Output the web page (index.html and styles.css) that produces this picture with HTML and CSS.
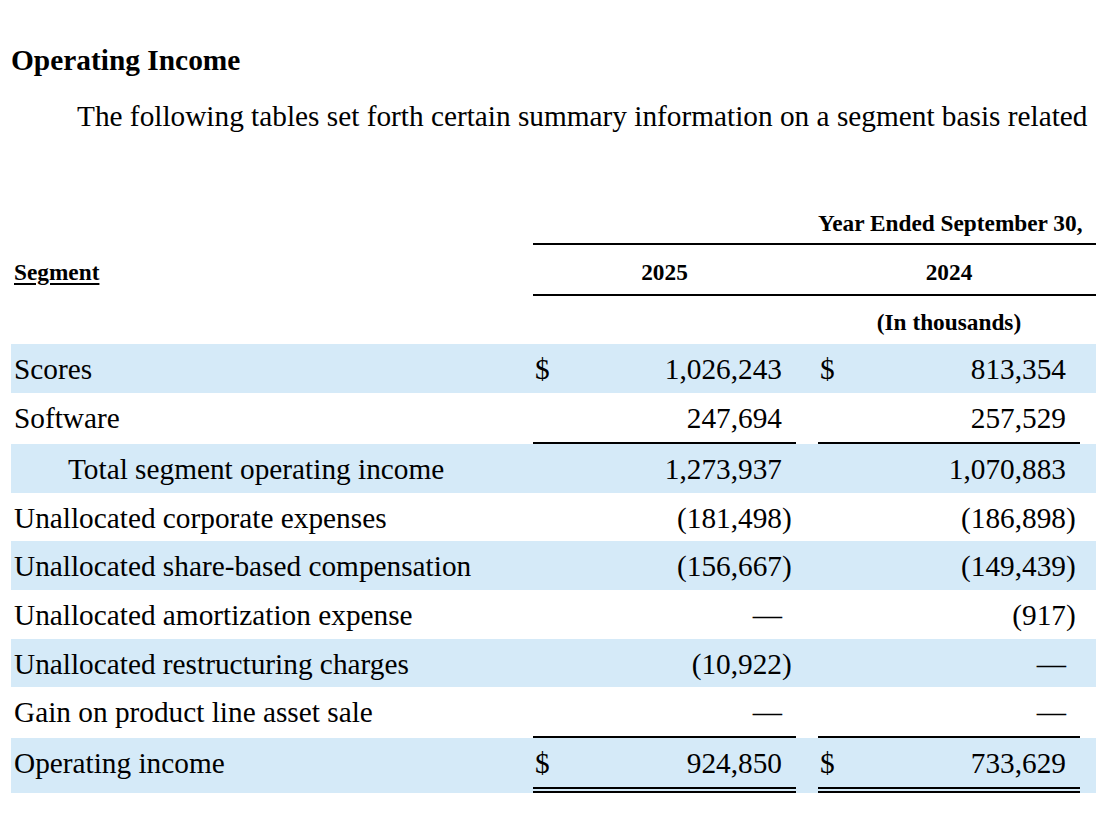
FILE: index.html
```html
<!DOCTYPE html>
<html lang="en">
<head>
<meta charset="utf-8">
<title>Operating Income</title>
<link rel="stylesheet" href="styles.css">
</head>
<body>
<div class="page">
  <h2 class="heading">Operating Income</h2>
  <p class="intro">The following tables set forth certain summary information on a segment basis related</p>

  <table class="fin">
    <colgroup>
      <col class="c-label">
      <col class="c-cur">
      <col class="c-num">
      <col class="c-par">
      <col class="c-gap">
      <col class="c-cur">
      <col class="c-num2">
      <col class="c-par">
      <col class="c-rest">
    </colgroup>
    <tbody>
      <tr class="h1">
        <td></td>
        <td colspan="4" class="ruled"></td>
        <td colspan="3" class="hd ruled">Year Ended September 30,</td>
        <td class="ruled"></td>
      </tr>
      <tr class="h2">
        <td class="seg">Segment</td>
        <td colspan="3" class="hd ruled">2025</td>
        <td class="ruled"></td>
        <td colspan="3" class="hd ruled">2024</td>
        <td class="ruled"></td>
      </tr>
      <tr class="h3">
        <td></td>
        <td colspan="4"></td>
        <td colspan="3" class="hd">(In thousands)</td>
        <td></td>
      </tr>

      <tr class="row shade">
        <td class="lbl">Scores</td>
        <td class="cur">$</td><td class="num">1,026,243</td><td class="par"></td>
        <td></td>
        <td class="cur">$</td><td class="num">813,354</td><td class="par"></td>
        <td></td>
      </tr>
      <tr class="row">
        <td class="lbl">Software</td>
        <td class="cur under"></td><td class="num under">247,694</td><td class="par under"></td>
        <td></td>
        <td class="cur under"></td><td class="num under">257,529</td><td class="par under"></td>
        <td></td>
      </tr>
      <tr class="row shade">
        <td class="lbl indent">Total segment operating income</td>
        <td class="cur"></td><td class="num">1,273,937</td><td class="par"></td>
        <td></td>
        <td class="cur"></td><td class="num">1,070,883</td><td class="par"></td>
        <td></td>
      </tr>
      <tr class="row">
        <td class="lbl">Unallocated corporate expenses</td>
        <td class="cur"></td><td class="num">(181,498</td><td class="par">)</td>
        <td></td>
        <td class="cur"></td><td class="num">(186,898</td><td class="par">)</td>
        <td></td>
      </tr>
      <tr class="row shade">
        <td class="lbl">Unallocated share-based compensation</td>
        <td class="cur"></td><td class="num">(156,667</td><td class="par">)</td>
        <td></td>
        <td class="cur"></td><td class="num">(149,439</td><td class="par">)</td>
        <td></td>
      </tr>
      <tr class="row">
        <td class="lbl">Unallocated amortization expense</td>
        <td class="cur"></td><td class="num">—</td><td class="par"></td>
        <td></td>
        <td class="cur"></td><td class="num">(917</td><td class="par">)</td>
        <td></td>
      </tr>
      <tr class="row shade">
        <td class="lbl">Unallocated restructuring charges</td>
        <td class="cur"></td><td class="num">(10,922</td><td class="par">)</td>
        <td></td>
        <td class="cur"></td><td class="num">—</td><td class="par"></td>
        <td></td>
      </tr>
      <tr class="row">
        <td class="lbl">Gain on product line asset sale</td>
        <td class="cur under"></td><td class="num under">—</td><td class="par under"></td>
        <td></td>
        <td class="cur under"></td><td class="num under">—</td><td class="par under"></td>
        <td></td>
      </tr>
      <tr class="row shade">
        <td class="lbl">Operating income</td>
        <td class="cur dbl">$</td><td class="num dbl">924,850</td><td class="par dbl"></td>
        <td></td>
        <td class="cur dbl">$</td><td class="num dbl">733,629</td><td class="par dbl"></td>
        <td></td>
      </tr>
    </tbody>
  </table>
</div>
</body>
</html>
```

FILE: styles.css
```css
html, body {
  margin: 0;
  padding: 0;
  background: #ffffff;
}

body {
  font-family: "Liberation Serif", "Times New Roman", Times, serif;
  color: #000000;
}

.page {
  width: 1085px;
  padding-left: 11px;
}

.heading {
  margin: 44px 0 0;
  font-size: 29.4px;
  line-height: 33px;
  font-weight: bold;
}

.intro {
  margin: 23px 0 0;
  font-size: 29.3px;
  line-height: 33px;
  text-indent: 66px;
  white-space: nowrap;
}

.fin {
  margin-top: 63px;
  table-layout: fixed;
  width: 1085px;
  border-collapse: separate;
  border-spacing: 0;
}

.c-label { width: 522px; }
.c-cur { width: 30px; }
.c-num { width: 219px; }
.c-num2 { width: 218px; }
.c-par { width: 14px; }
.c-gap { width: 22px; }
.c-rest { width: 16px; }

.fin td {
  padding: 0;
  vertical-align: top;
  white-space: nowrap;
}

/* header rows */
.h1 td,
.h2 td,
.h3 td {
  font-size: 23.3px;
  font-weight: bold;
}

.h1 td {
  padding-top: 8px;
  line-height: 38.7px;
}

.h2 td {
  padding-top: 5px;
  line-height: 44px;
}

.h3 td {
  padding-top: 5px;
  line-height: 43.7px;
}

.hd {
  text-align: center;
}

.ruled {
  border-bottom: 2px solid #000000;
}

.seg {
  padding-left: 3px !important;
  text-decoration: underline;
  text-underline-offset: 3px;
  text-decoration-thickness: 2px;
}

/* body rows */
.row td {
  font-size: 29.3px;
  padding-top: 3px;
  line-height: 45.7px;
}

.shade td {
  background: #d5eaf8;
}

.lbl {
  padding-left: 3px !important;
}

.indent {
  padding-left: 57px !important;
}

.cur {
  padding-left: 2px !important;
  text-align: left;
}

.num {
  text-align: right;
}

.par {
  text-align: left;
}

.under {
  border-bottom: 2px solid #000000;
}

.dbl {
  border-bottom: 6px double #000000;
}
```
